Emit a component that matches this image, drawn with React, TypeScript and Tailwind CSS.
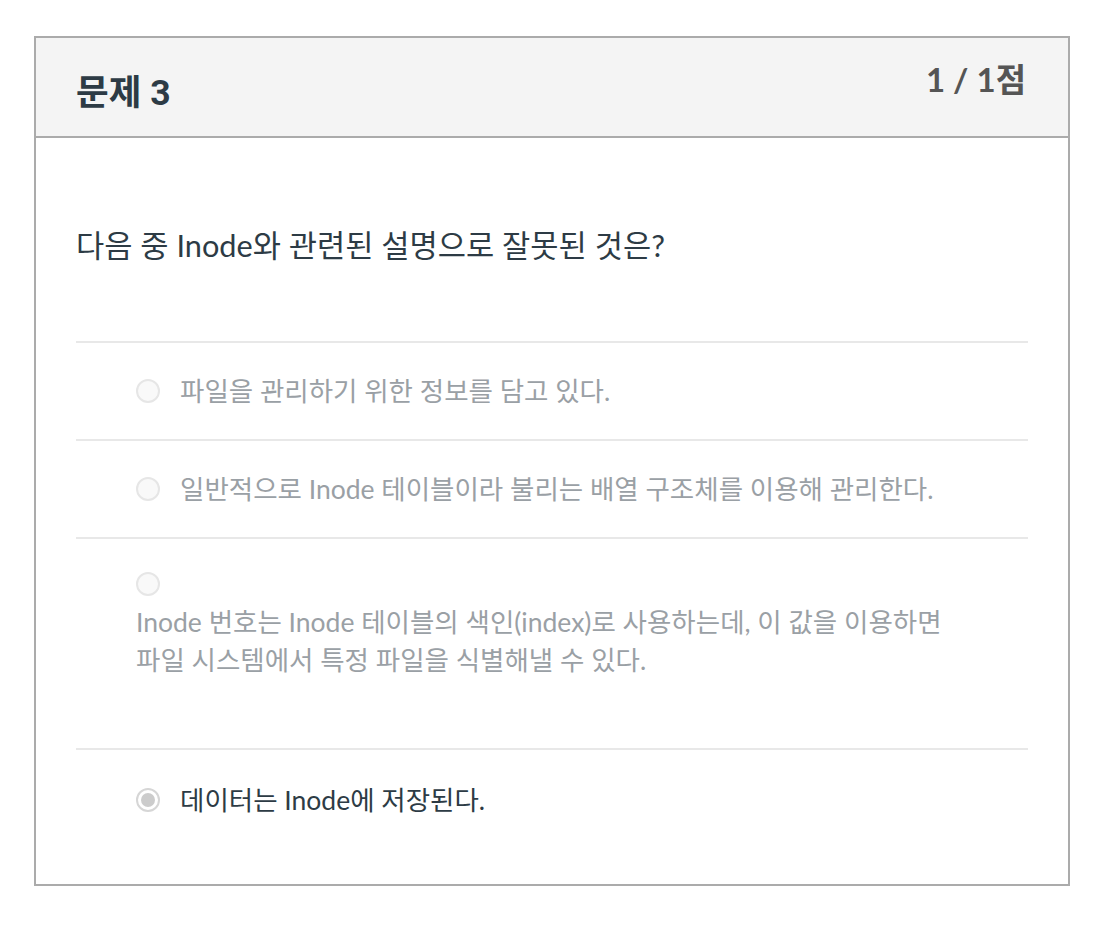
import React from 'react';

type Answer = { id: string; lines: string[]; selected?: boolean; stacked?: boolean };

const answers: Answer[] = [
  { id: 'a1', lines: ['파일을 관리하기 위한 정보를 담고 있다.'] },
  { id: 'a2', lines: ['일반적으로 Inode 테이블이라 불리는 배열 구조체를 이용해 관리한다.'] },
  {
    id: 'a3',
    stacked: true,
    lines: [
      'Inode 번호는 Inode 테이블의 색인(index)로 사용하는데, 이 값을 이용하면',
      '파일 시스템에서 특정 파일을 식별해낼 수 있다.',
    ],
  },
  { id: 'a4', lines: ['데이터는 Inode에 저장된다.'], selected: true },
];

const Radio: React.FC<{ checked?: boolean }> = ({ checked }) =>
  checked ? (
    <span className="w-[24px] h-[24px] rounded-full border-2 border-[#d6d6d6] bg-white flex items-center justify-center shrink-0">
      <span className="w-[14px] h-[14px] rounded-full bg-[#cccccc]"></span>
    </span>
  ) : (
    <span className="w-[24px] h-[24px] rounded-full border-2 border-[#e6e6e6] bg-[#f9f9f9] shrink-0"></span>
  );

export default function App() {
  return (
    <div
      className="w-[1104px] h-[938px] bg-white pt-[36px] pl-[34px]"
      style={{ fontFamily: 'Lato, "Noto Sans CJK KR", sans-serif' }}
    >
      <div className="w-[1036px] border-2 border-[#ababab] bg-white">
        {/* header */}
        <div className="h-[100px] bg-[#f4f4f4] border-b-2 border-[#ababab] flex justify-between items-start px-10">
          <h2
            className="mt-[32px] text-[35.5px] leading-[46px] font-bold text-[#2d3b45]"
            style={{ fontFamily: 'Roboto, "Noto Sans CJK KR", sans-serif' }}
          >
            문제 3
          </h2>
          <span className="mt-[20px] mr-[2px] text-[33px] leading-[42px] font-bold text-[#555555]">1 / 1점</span>
        </div>

        {/* body */}
        <div className="px-10">
          <p className="pt-[88px] pb-[75px] text-[30.7px] leading-[40px] text-[#2d3b45]">
            다음 중 Inode와 관련된 설명으로 잘못된 것은?
          </p>

          {answers.map((a, i) => (
            <div
              key={a.id}
              className={
                'border-t-2 border-[#e8e8e8] pl-[60px] text-[26.5px] leading-[38px] ' +
                (i === 3 ? 'pt-[31px] pb-[65px] ' : a.stacked ? 'pt-[26px] pb-[69px] ' : 'pt-[29px] pb-[29px] ') +
                (a.selected ? 'text-[#2d3b45]' : 'text-[#9aa0a5]')
              }
            >
              {a.stacked ? (
                <div>
                  <div className="h-[38px] flex items-center">
                    <Radio />
                  </div>
                  {a.lines.map((l) => (
                    <div key={l}>{l}</div>
                  ))}
                </div>
              ) : (
                <div className="flex items-center gap-[20px]">
                  <Radio checked={a.selected} />
                  <span>{a.lines[0]}</span>
                </div>
              )}
            </div>
          ))}
        </div>
      </div>
    </div>
  );
}
